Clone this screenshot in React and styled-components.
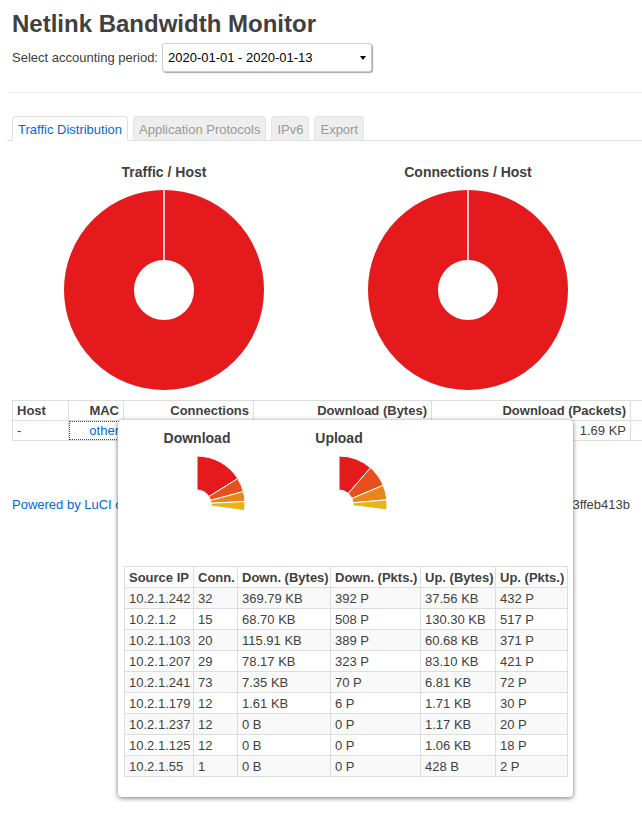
import React from "react";
import styled, { createGlobalStyle } from "styled-components";

const GlobalStyle = createGlobalStyle`
  html, body {
    margin: 0;
    padding: 0;
    background: #fff;
  }
  body {
    font-family: "Liberation Sans", Arial, sans-serif;
    font-size: 13px;
    color: #404040;
  }
`;

const Page = styled.div`
  width: 642px;
  min-height: 100vh;
  box-sizing: border-box;
  padding: 0 12px;
  overflow: visible;
`;

const Title = styled.h2`
  margin: 0;
  padding-top: 10px;
  font-size: 24px;
  line-height: 27px;
  font-weight: bold;
  color: #404040;
`;

const PeriodRow = styled.div`
  display: flex;
  align-items: center;
  gap: 4px;
  margin-top: 6px;
  height: 29px;
`;

const Select = styled.div`
  width: 210px;
  height: 29px;
  box-sizing: border-box;
  border: 1px solid #ccc;
  border-radius: 3px;
  box-shadow: 1px 1px 1px rgba(0, 0, 0, 0.35);
  display: flex;
  align-items: center;
  justify-content: space-between;
  padding: 0 5px;
  color: #000;
  background: #fff;
`;

const Caret = styled.span`
  width: 0;
  height: 0;
  border-left: 3px solid transparent;
  border-right: 3px solid transparent;
  border-top: 4px solid #000;
`;

const Rule = styled.div`
  height: 1px;
  background: #eee;
  margin: 20px -12px 0 -2px;
`;

const TabBar = styled.div`
  display: flex;
  gap: 5px;
  margin: 23px -12px 0 -5px;
  padding-left: 5px;
  border-bottom: 1px solid #ddd;
`;

const Tab = styled.div`
  height: 23px;
  line-height: 25px;
  padding: 0 5px;
  border: 1px solid ${({ $active }) => ($active ? "#ddd" : "#e4e4e4")};
  border-bottom-color: ${({ $active }) => ($active ? "#fff" : "#ddd")};
  border-radius: 4px 4px 0 0;
  margin-bottom: -1px;
  background: ${({ $active }) => ($active ? "#fff" : "#eee")};
  color: ${({ $active }) => ($active ? "#0069d6" : "#999")};
`;

const Charts = styled.div`
  display: grid;
  grid-template-columns: 304px 304px;
  margin-top: 23px;
`;

const ChartBox = styled.div`
  display: flex;
  flex-direction: column;
  align-items: center;
`;

const ChartTitle = styled.div`
  font-size: 14px;
  line-height: 16px;
  font-weight: bold;
  margin-bottom: 10px;
`;

const HostArea = styled.div`
  position: relative;
  margin-top: 10px;
`;

const HostTable = styled.table`
  border-collapse: collapse;
  table-layout: fixed;
  width: 631px;
`;

const HostHead = styled.th`
  height: 19px;
  padding: 0 4px;
  border: 1px solid #ddd;
  font-weight: bold;
  text-align: ${({ $left }) => ($left ? "left" : "right")};
  white-space: nowrap;
`;

const HostCell = styled.td`
  height: 19px;
  padding: ${({ $flush }) => ($flush ? "0" : "0 4px")};
  border: 1px solid #ddd;
  text-align: ${({ $left }) => ($left ? "left" : "right")};
  white-space: nowrap;
`;

const MacLink = styled.a`
  display: block;
  padding: 0 4px;
  line-height: 19px;
  color: #0069d6;
  text-decoration: none;
  outline: 1px dotted #2a4f8f;
  outline-offset: -1px;
`;

const Footer = styled.div`
  display: flex;
  justify-content: space-between;
  gap: 12px;
  margin-top: 55px;
  line-height: 18px;
  white-space: nowrap;
`;

const FooterLink = styled.a`
  color: #0069d6;
  text-decoration: none;
  min-width: 0;
  overflow: hidden;
`;

const Popup = styled.div`
  position: absolute;
  left: 106px;
  top: 20px;
  width: 455px;
  box-sizing: border-box;
  padding: 10px 6px 20px;
  background: #fff;
  border-radius: 4px;
  box-shadow: 0 1px 5px rgba(0, 0, 0, 0.55);
  z-index: 10;
`;

const PieRow = styled.div`
  display: grid;
  grid-template-columns: 142px 142px;
  padding: 0 2px;
`;

const PieCol = styled.div`
  display: flex;
  flex-direction: column;
  align-items: center;
`;

const PieTitle = styled.div`
  font-size: 14px;
  line-height: 16px;
  font-weight: bold;
  margin-bottom: 8px;
`;

const SourceTable = styled.table`
  margin-top: 12px;
  width: 443px;
  border-collapse: collapse;
  table-layout: fixed;
`;

const SourceHead = styled.th`
  height: 20px;
  padding: 0 4px;
  border: 1px solid #ddd;
  font-weight: bold;
  text-align: left;
  white-space: nowrap;
  background: #fff;
`;

const SourceRow = styled.tr`
  background: ${({ $odd }) => ($odd ? "#f9f9f9" : "#fff")};
`;

const SourceCell = styled.td`
  height: 20px;
  padding: 0 4px;
  border: 1px solid #ddd;
  white-space: nowrap;
`;

const COLORS = ["#e41a1c", "#e84f1d", "#e8851c", "#e6b51c"];

const arcPath = (cx, cy, r0, r1, a0, a1) => {
  const pt = (r, a) => {
    const t = ((a - 90) * Math.PI) / 180;
    return [cx + r * Math.cos(t), cy + r * Math.sin(t)];
  };
  const [x1, y1] = pt(r1, a0);
  const [x2, y2] = pt(r1, a1);
  const [x3, y3] = pt(r0, a1);
  const [x4, y4] = pt(r0, a0);
  const big = a1 - a0 > 180 ? 1 : 0;
  return `M${x1} ${y1} A${r1} ${r1} 0 ${big} 1 ${x2} ${y2} L${x3} ${y3} A${r0} ${r0} 0 ${big} 0 ${x4} ${y4} Z`;
};

const Donut = () => (
  <svg width="200" height="200" viewBox="0 0 200 200">
    <circle cx="100" cy="100" r="65" fill="none" stroke="#e41a1c" strokeWidth="70" />
    <line x1="100" y1="0" x2="100" y2="70" stroke="#fff" strokeWidth="1.5" />
  </svg>
);

// pie caught mid-animation: only the first few slices are drawn
const Fan = ({ stops }) => (
  <svg width="100" height="100" viewBox="0 0 100 100">
    {stops.slice(0, -1).map((a, i) => (
      <path
        key={i}
        d={arcPath(50, 50, 14, 48, a, stops[i + 1])}
        fill={COLORS[i]}
        stroke="#fff"
        strokeWidth="1"
      />
    ))}
  </svg>
);

const sources = [
  ["10.2.1.242", "32", "369.79 KB", "392 P", "37.56 KB", "432 P"],
  ["10.2.1.2", "15", "68.70 KB", "508 P", "130.30 KB", "517 P"],
  ["10.2.1.103", "20", "115.91 KB", "389 P", "60.68 KB", "371 P"],
  ["10.2.1.207", "29", "78.17 KB", "323 P", "83.10 KB", "421 P"],
  ["10.2.1.241", "73", "7.35 KB", "70 P", "6.81 KB", "72 P"],
  ["10.2.1.179", "12", "1.61 KB", "6 P", "1.71 KB", "30 P"],
  ["10.2.1.237", "12", "0 B", "0 P", "1.17 KB", "20 P"],
  ["10.2.1.125", "12", "0 B", "0 P", "1.06 KB", "18 P"],
  ["10.2.1.55", "1", "0 B", "0 P", "428 B", "2 P"],
];

const sourceCols = [
  ["Source IP", 69],
  ["Conn.", 44],
  ["Down. (Bytes)", 93],
  ["Down. (Pkts.)", 90],
  ["Up. (Bytes)", 75],
  ["Up. (Pkts.)", 72],
];

const hostCols = [
  ["Host", 56, true],
  ["MAC", 55],
  ["Connections", 130],
  ["Download (Bytes)", 178],
  ["Download (Packets)", 199],
  ["", 13],
];

const App = () => {
  return (
    <>
      <GlobalStyle />
      <Page>
        <Title>Netlink Bandwidth Monitor</Title>
        <PeriodRow>
          <span>Select accounting period:</span>
          <Select>
            <span>2020-01-01 - 2020-01-13</span>
            <Caret />
          </Select>
        </PeriodRow>
        <Rule />

        <TabBar>
          <Tab $active>Traffic Distribution</Tab>
          <Tab>Application Protocols</Tab>
          <Tab>IPv6</Tab>
          <Tab>Export</Tab>
        </TabBar>

        <Charts>
          <ChartBox>
            <ChartTitle>Traffic / Host</ChartTitle>
            <Donut />
          </ChartBox>
          <ChartBox>
            <ChartTitle>Connections / Host</ChartTitle>
            <Donut />
          </ChartBox>
        </Charts>

        <HostArea>
          <HostTable>
            <colgroup>
              {hostCols.map(([name, w], i) => (
                <col key={i} style={{ width: w }} />
              ))}
            </colgroup>
            <thead>
              <tr>
                {hostCols.map(([name, , left], i) => (
                  <HostHead key={i} $left={left}>
                    {name}
                  </HostHead>
                ))}
              </tr>
            </thead>
            <tbody>
              <tr>
                <HostCell $left>-</HostCell>
                <HostCell $flush>
                  <MacLink href="#">other</MacLink>
                </HostCell>
                <HostCell>230</HostCell>
                <HostCell>673.53 KB</HostCell>
                <HostCell>1.69 KP</HostCell>
                <HostCell />
              </tr>
            </tbody>
          </HostTable>

          <Popup>
            <PieRow>
              <PieCol>
                <PieTitle>Download</PieTitle>
                <Fan stops={[0, 58, 75, 87, 98]} />
              </PieCol>
              <PieCol>
                <PieTitle>Upload</PieTitle>
                <Fan stops={[0, 41, 67, 85, 97]} />
              </PieCol>
            </PieRow>
            <SourceTable>
              <colgroup>
                {sourceCols.map(([name, w]) => (
                  <col key={name} style={{ width: w }} />
                ))}
              </colgroup>
              <thead>
                <tr>
                  {sourceCols.map(([name]) => (
                    <SourceHead key={name}>{name}</SourceHead>
                  ))}
                </tr>
              </thead>
              <tbody>
                {sources.map((row, i) => (
                  <SourceRow key={row[0]} $odd={i % 2 === 0}>
                    {row.map((v, j) => (
                      <SourceCell key={j}>{v}</SourceCell>
                    ))}
                  </SourceRow>
                ))}
              </tbody>
            </SourceTable>
          </Popup>
        </HostArea>

        <Footer>
          <FooterLink href="#">
            Powered by LuCI openwrt-19.07 branch (git-20.010.36487)
          </FooterLink>
          <span>OpenWrt 19.07.0 r10860-a3ffeb413b</span>
        </Footer>
      </Page>
    </>
  );
};

export default App;
